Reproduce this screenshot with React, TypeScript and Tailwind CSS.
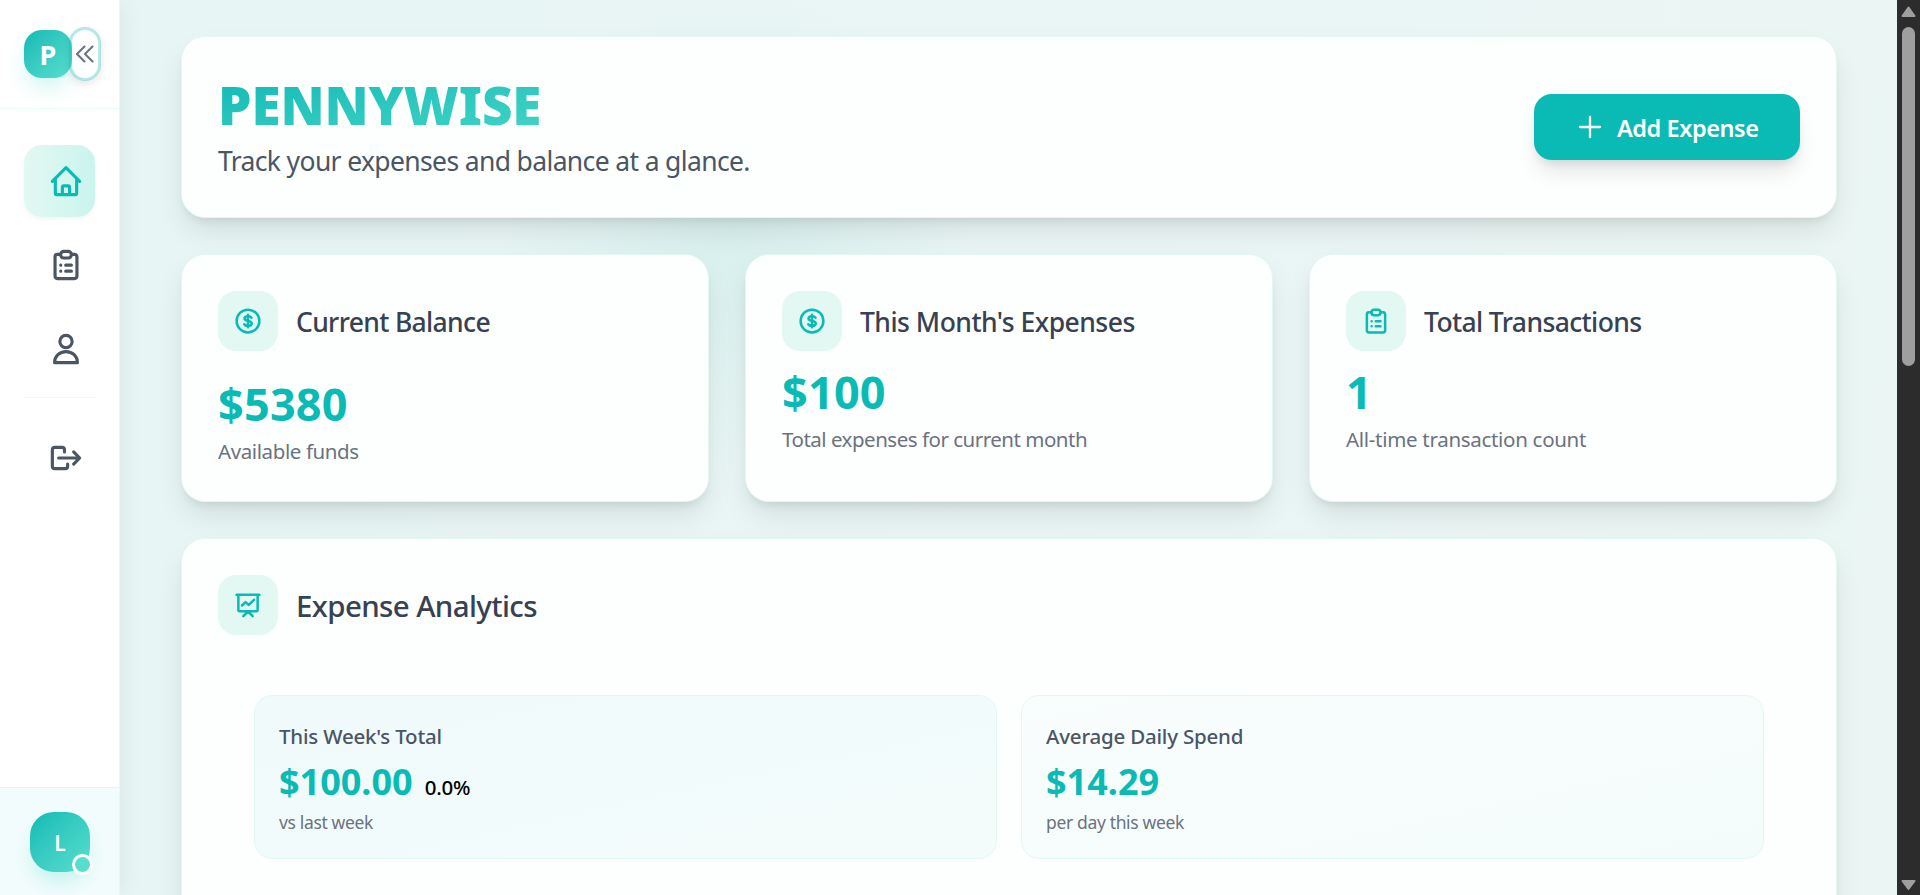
import React from "react";

type IconProps = { size: number; sw: number; className?: string };

const Svg = ({ size, sw, className, children }: IconProps & { children: React.ReactNode }) => (
  <svg width={size} height={size} viewBox="0 0 24 24" fill="none" stroke="currentColor" strokeWidth={sw} strokeLinecap="round" strokeLinejoin="round" className={`shrink-0 ${className ?? ""}`}>
    {children}
  </svg>
);
const Home = (p: IconProps) => (
  <Svg {...p}>
    <path d="M2.9 12.2 12 3.1l9.1 9.1M4.9 10.6V20.2c0 .5.4.9.9.9h12.4c.5 0 .9-.4.9-.9V10.6M9.6 21v-4.8c0-.6.4-1 1-1h2.8c.6 0 1 .4 1 1V21" />
  </Svg>
);
const Clipboard = (p: IconProps) => (
  <Svg {...p}>
    <path d="M8.4 4.9H6.2c-1.1 0-1.5.8-1.5 1.7v12.8c0 1.1.6 1.7 1.7 1.7h11.2c1.1 0 1.7-.6 1.7-1.7V6.6c0-1.1-.6-1.7-1.7-1.7h-2" />
    <rect x="8.4" y="2.9" width="7.2" height="4.4" rx="2.1" />
    <path d="M8.5 12.1h.02M8.5 16.1h.02M11.8 12.1h3.8M11.8 16.1h3.8" />
  </Svg>
);
const User = (p: IconProps) => (
  <Svg {...p}>
    <circle cx="12" cy="7" r="4.1" />
    <path d="M4.4 21.1c0-4.3 3.3-7.4 7.6-7.4s7.6 3.1 7.6 7.4z" />
  </Svg>
);
const Logout = (p: IconProps) => (
  <Svg {...p}>
    <path d="M11 8V6.5c0-1-.6-1.6-1.6-1.6H4.5c-1 0-1.6.6-1.6 1.6v11c0 1 .6 1.6 1.6 1.6h7c1 0 1.6-.6 1.6-1.6V16M7.1 12h13.7M17.1 7.9l4 4.1-4 4.1" />
  </Svg>
);
const Dollar = (p: IconProps) => (
  <Svg {...p}>
    <circle cx="12" cy="12" r="9.1" />
    <path d="M12 7v10M14.8 9.3c-.5-.8-1.5-1.2-2.8-1.2-1.7 0-2.8.7-2.8 1.9 0 2.7 5.8 1.3 5.8 4 0 1.2-1.2 1.9-3 1.9-1.4 0-2.5-.5-3-1.3" />
  </Svg>
);
const Board = (p: IconProps) => (
  <Svg {...p}>
    <path d="M2.9 3.8h18.2M4.300 3.8v12c0 .7.4 1.1 1.1 1.1h13.2c.7 0 1.1-.4 1.1-1.1v-12M8.3 20.9l3.7-3.7 3.7 3.7M7.2 12.4l2.8-2.7 2.6 2.2 4.2-4" />
  </Svg>
);
const Chevrons = () => (
  <svg width="18" height="18" viewBox="0 0 18 18" fill="none" stroke="#6b7280" strokeWidth="2.1" strokeLinecap="round" strokeLinejoin="round" className="shrink-0">
    <path d="M8.500 1.500 1 9l7.500 7.500M16.500 1.500 9 9l7.500 7.500" />
  </svg>
);

const CARD = "rounded-[24px] border border-[#e4f8f2] bg-[#fdfffe] shadow-[0_15px_30px_-4px_rgba(0,0,0,0.10),0_6px_10px_-4px_rgba(0,0,0,0.09)]";

function IconBox({ children }: { children: React.ReactNode }) {
  return <div className="flex size-[60px] shrink-0 items-center justify-center rounded-[18px] bg-[#e3f8f2] text-[#0abab5]">{children}</div>;
}

function Stat({ icon, title, titleCls, value, note, noteCls, gap }: { icon: React.ReactNode; title: string; titleCls: string; value: string; note: string; noteCls: string; gap: string }) {
  return (
    <section className={`${CARD} h-[248px] px-[36px] pt-[36px]`}>
      <div className="flex items-center gap-[18px]">
        <IconBox>{icon}</IconBox>
        <h2 className={`pt-[1px] whitespace-nowrap text-[26.5px] leading-[42px] font-medium text-[#374151] ${titleCls}`}>{title}</h2>
      </div>
      <div className={`text-[45px] leading-[54px] font-bold tracking-[0.2px] text-[#0abab5] ${gap}`}>{value}</div>
      <div className={`mt-[5px] whitespace-nowrap text-[20.5px] leading-[30px] text-[#6b7280] ${noteCls}`}>{note}</div>
    </section>
  );
}

function Mini({ title, value, extra, note, cls }: { title: string; value: string; extra?: string; note: string; cls: string }) {
  return (
    <div className={`h-[164px] rounded-[18px] border border-[#e4f8f3] pt-[25px] pl-[24px] ${cls}`}>
      <div className="text-[20.5px] leading-[30px] font-medium tracking-[-0.2px] text-[#4b5563]">{title}</div>
      <div className="mt-[7px] flex items-baseline gap-[12px]">
        <span className="text-[36px] leading-[48px] font-bold text-[#0abab5]">{value}</span>
        {extra && <span className="text-[20.5px] font-medium tracking-[-0.2px] text-black">{extra}</span>}
      </div>
      <div className="mt-[4px] text-[17.5px] leading-[24px] tracking-[-0.35px] text-[#6b7280]">{note}</div>
    </div>
  );
}

export default function App() {
  return (
    <div className="flex h-[895px] w-[1920px] overflow-hidden bg-[#e8f5f4] font-['Noto_Sans','Open_Sans',sans-serif]">
      <aside className="z-10 flex w-[120px] shrink-0 flex-col border-r border-[#e6faf5] bg-white shadow-[0_0_24px_rgba(0,0,0,0.07)]">
        <div className="flex h-[109px] items-start border-b border-[#e8fbf7] pl-[24px]">
          <div className="mt-[30px] flex size-[48px] shrink-0 items-center justify-center rounded-[18px] bg-linear-to-br from-[#0abab5] to-[#56dfcf] pt-[2px] text-[27px] font-bold text-white shadow-[0_12px_22px_-4px_rgba(86,223,207,0.32)]">P</div>
          <div className="-ml-[3px] mt-[27px] flex h-[54px] w-[32px] shrink-0 items-center justify-center rounded-full border-[3px] border-[#0abab5]/30 bg-white bg-clip-padding shadow-[0_3px_8px_rgba(0,0,0,0.1)]">
            <Chevrons />
          </div>
        </div>
        <nav className="flex flex-col px-[24px] pt-[36px] text-[#4b5563]">
          <div className="flex h-[72px] w-[71px] items-center rounded-[18px] bg-linear-to-r from-[#e3f8f2] to-[#caf4ee] pl-[24px] text-[#0abab5] shadow-[0_2px_4px_rgba(0,0,0,0.05)]"><Home size={36} sw={2.1} /></div>
          <div className="mt-[12px] flex h-[72px] items-center pl-[24px]"><Clipboard size={36} sw={2.1} /></div>
          <div className="mt-[12px] flex h-[72px] items-center pl-[24px]"><User size={36} sw={2.1} /></div>
          <div className="mt-[12px] h-px w-[71px] bg-[#e6faf6]" />
          <div className="mt-[24px] flex h-[72px] items-center pl-[24px]"><Logout size={36} sw={2.1} /></div>
        </nav>
        <div className="mt-auto h-[108px] border-t border-[#e3f6f3] bg-[#f3fcfc] pt-[24px] pl-[30px]">
          <div className="relative flex size-[60px] items-center justify-center rounded-[24px] bg-linear-to-br from-[#0abab5] to-[#56dfcf] pt-[3px] text-[21px] font-semibold text-white shadow-[0_12px_20px_-3px_rgba(86,223,207,0.32)]">
            L
            <span className="absolute -right-[3px] -bottom-[3px] size-[21px] rounded-full border-[3px] border-white bg-[#56dfcf]" />
          </div>
        </div>
      </aside>

      <main className="flex w-[1777px] shrink-0 flex-col gap-[36px] bg-[radial-gradient(circle_at_610px_235px,#d8f0ee_0px,rgba(232,245,244,0)_240px),linear-gradient(100deg,#e7f5f5,#ebf6f4)] pt-[36px] pr-[60px] pl-[61px]">
        <header className={`${CARD} flex h-[182px] shrink-0 items-center justify-between pr-[36px] pl-[36px]`}>
          <div className="pt-[3px]">
            <h1 className="w-fit bg-linear-to-br from-[#0abab5] to-[#40d4c6] bg-clip-text text-[53px] leading-[60px] font-black tracking-[-0.1px] text-transparent">PENNYWISE</h1>
            <p className="mt-[5px] whitespace-nowrap text-[26.5px] leading-[42px] tracking-[-0.64px] text-[#4b5563]">Track your expenses and balance at a glance.</p>
          </div>
          <button className="flex h-[66px] w-[266px] items-center rounded-[18px] bg-[#0abab5] pl-[43px] text-white shadow-[0_15px_22px_-4px_rgba(0,0,0,0.10),0_6px_9px_-3px_rgba(0,0,0,0.09)]">
            <svg width="26" height="26" viewBox="0 0 26 26" className="shrink-0" stroke="white" strokeWidth="2.3" strokeLinecap="round"><path d="M13 3v20M3 13h20" /></svg>
            <span className="ml-[14px] pt-[3px] whitespace-nowrap text-[23.5px] font-semibold tracking-[-0.45px]">Add Expense</span>
          </button>
        </header>

        <div className="grid shrink-0 grid-cols-3 gap-[36px]">
          <Stat icon={<Dollar size={30} sw={2} />} title="Current Balance" titleCls="tracking-[-0.66px]" value="$5380" note="Available funds" noteCls="tracking-[-0.4px]" gap="mt-[26px]" />
          <Stat icon={<Dollar size={30} sw={2} />} title="This Month's Expenses" titleCls="tracking-[-0.52px]" value="$100" note="Total expenses for current month" noteCls="tracking-[-0.49px]" gap="mt-[14px]" />
          <Stat icon={<Clipboard size={30} sw={2} />} title="Total Transactions" titleCls="tracking-[-0.62px]" value="1" note="All-time transaction count" noteCls="tracking-[-0.3px]" gap="mt-[14px]" />
        </div>

        <section className={`${CARD} h-[420px] shrink-0 px-[36px] pt-[36px]`}>
          <div className="flex items-center gap-[18px]">
            <IconBox><Board size={30} sw={2} /></IconBox>
            <h2 className="pt-[1px] text-[29.5px] leading-[42px] font-medium tracking-[-0.62px] text-[#374151]">Expense Analytics</h2>
          </div>
          <div className="mt-[60px] grid grid-cols-2 gap-[24px] px-[36px]">
            <Mini title="This Week's Total" value="$100.00" extra="0.0%" note="vs last week" cls="bg-linear-to-br from-[#f0fafb] to-[#f4fcfb]" />
            <Mini title="Average Daily Spend" value="$14.29" note="per day this week" cls="bg-linear-to-br from-[#f9fdfd] to-[#f3fcfb]" />
          </div>
        </section>
      </main>

      <div className="flex w-[23px] shrink-0 flex-col items-center bg-[#2c2c2c]">
        <svg width="23" height="27" viewBox="0 0 23 27" fill="#9f9f9f" className="shrink-0"><path d="M11.500 7.500 17.500 16h-12z" stroke="#9f9f9f" strokeWidth="2" strokeLinejoin="round" /></svg>
        <div className="h-[339px] w-[13px] shrink-0 rounded-full bg-[#9f9f9f]" />
        <svg width="23" height="27" viewBox="0 0 23 27" fill="#9f9f9f" className="mt-auto shrink-0"><path d="M11.500 21 5.500 13h12z" stroke="#9f9f9f" strokeWidth="2" strokeLinejoin="round" /></svg>
      </div>
    </div>
  );
}
